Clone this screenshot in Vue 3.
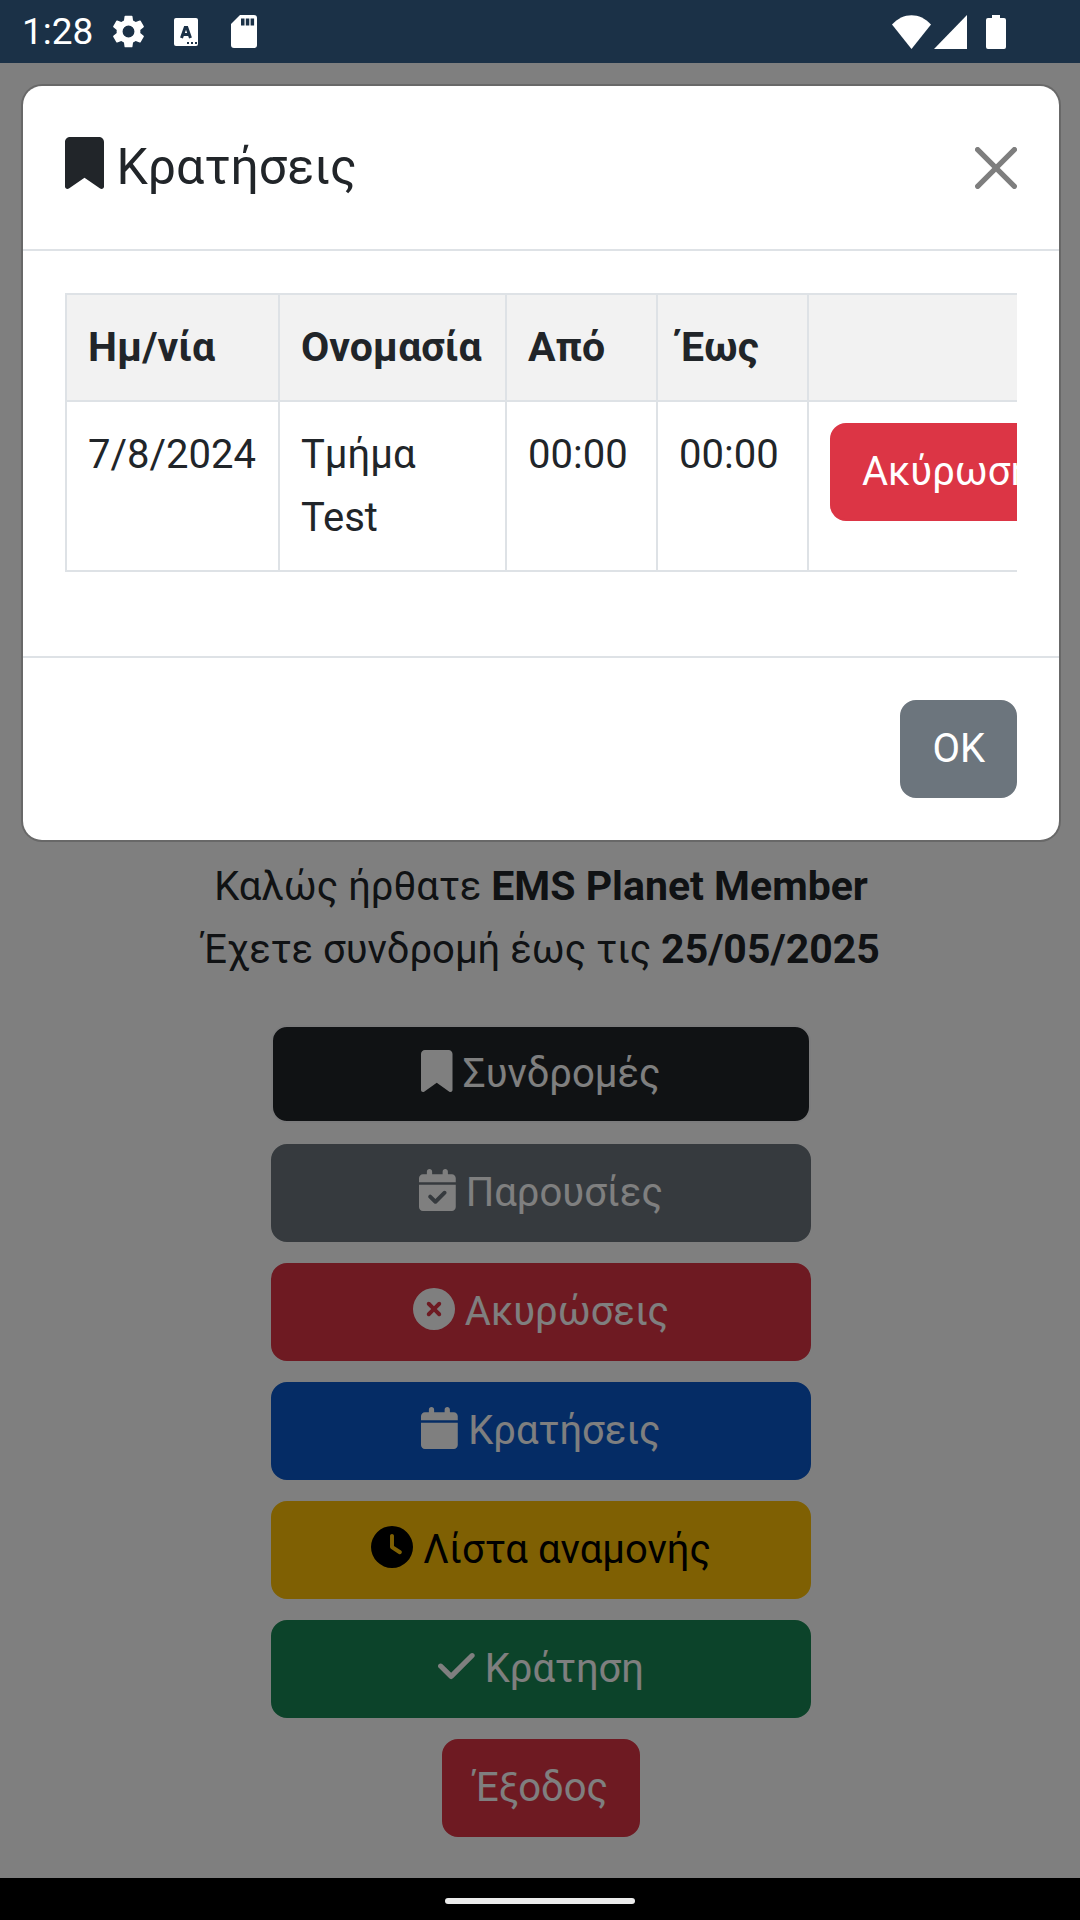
<script setup>
import { ref } from "vue";

const showModal = ref(true);

// Member info shown in the welcome text
const member = {
  name: "EMS Planet Member",
  until: "25/05/2025",
};

const headers = ["Ημ/νία", "Ονομασία", "Από", "Έως", ""];

const bookings = ref([
  { id: 1, date: "7/8/2024", title: "Τμήμα Test", from: "00:00", to: "00:00" },
]);

const icons = {
  bookmark: {
    box: "0 0 384 512",
    path: "M0 48V487.7C0 501.1 10.9 512 24.3 512c5 0 9.9-1.5 14-4.4L192 400 345.7 507.6c4.1 2.9 9 4.4 14 4.4c13.4 0 24.3-10.9 24.3-24.3V48c0-26.5-21.5-48-48-48H48C21.5 0 0 21.5 0 48z",
  },
  calendarCheck: {
    box: "0 0 448 512",
    path: "M128 0c17.7 0 32 14.3 32 32V64H288V32c0-17.7 14.3-32 32-32s32 14.3 32 32V64h48c26.5 0 48 21.5 48 48v48H0V112C0 85.5 21.5 64 48 64H96V32c0-17.7 14.3-32 32-32zM0 192H448V464c0 26.5-21.5 48-48 48H48c-26.5 0-48-21.5-48-48V192zM329 305c9.4-9.4 9.4-24.6 0-33.9s-24.6-9.4-33.9 0l-95 95-47-47c-9.4-9.4-24.6-9.4-33.9 0s-9.4 24.6 0 33.9l64 64c9.4 9.4 24.6 9.4 33.9 0L329 305z",
  },
  circleXmark: {
    box: "0 0 512 512",
    path: "M256 512A256 256 0 1 0 256 0a256 256 0 1 0 0 512zM175 175c9.4-9.4 24.6-9.4 33.9 0l47 47 47-47c9.4-9.4 24.6-9.4 33.9 0s9.4 24.6 0 33.9l-47 47 47 47c9.4 9.4 9.4 24.6 0 33.9s-24.6 9.4-33.9 0l-47-47-47 47c-9.4 9.4-24.6 9.4-33.9 0s-9.4-24.6 0-33.9l47-47-47-47c-9.4-9.4-9.4-24.6 0-33.9z",
  },
  calendar: {
    box: "0 0 448 512",
    path: "M96 32V64H48C21.5 64 0 85.5 0 112v48H448V112c0-26.5-21.5-48-48-48H352V32c0-17.7-14.3-32-32-32s-32 14.3-32 32V64H160V32c0-17.7-14.3-32-32-32S96 14.3 96 32zM448 192H0V464c0 26.5 21.5 48 48 48H400c26.5 0 48-21.5 48-48V192z",
  },
  clock: {
    box: "0 0 512 512",
    path: "M256 0a256 256 0 1 1 0 512A256 256 0 1 1 256 0zM232 120V256c0 8 4 15.5 10.7 20l96 64c11 7.4 25.9 4.4 33.3-6.7s4.4-25.9-6.7-33.3L280 243.2V120c0-13.3-10.7-24-24-24s-24 10.7-24 24z",
  },
  check: {
    box: "0 0 448 512",
    path: "M438.6 105.4c12.5 12.5 12.5 32.8 0 45.3l-256 256c-12.5 12.5-32.8 12.5-45.3 0l-128-128c-12.5-12.5-12.5-32.8 0-45.3s32.8-12.5 45.3 0L160 338.7 393.4 105.4c12.5-12.5 32.8-12.5 45.3 0z",
  },
};

const menu = [
  { label: "Συνδρομές", icon: icons.bookmark, color: "dark" },
  { label: "Παρουσίες", icon: icons.calendarCheck, color: "secondary" },
  { label: "Ακυρώσεις", icon: icons.circleXmark, color: "danger" },
  { label: "Κρατήσεις", icon: icons.calendar, color: "primary" },
  { label: "Λίστα αναμονής", icon: icons.clock, color: "warning" },
  { label: "Κράτηση", icon: icons.check, color: "success" },
];

const closeModal = () => {
  showModal.value = false;
};

const openModal = () => {
  showModal.value = true;
};

// Removes the booking from the list
const cancelBooking = (id) => {
  bookings.value = bookings.value.filter((b) => b.id !== id);
};
</script>

<template>
  <div class="screen">
    <!-- Status bar -->
    <header class="status-bar">
      <div class="status-left">
        <span class="time">1:28</span>
        <svg class="status-icon gear" viewBox="2 2 20 20">
          <path
            d="M19.14 12.94c.04-.3.06-.61.06-.94 0-.32-.02-.64-.07-.94l2.03-1.58a.49.49 0 0 0 .12-.61l-1.92-3.32a.49.49 0 0 0-.59-.22l-2.39.96c-.5-.38-1.03-.7-1.62-.94l-.36-2.54a.48.48 0 0 0-.48-.41h-3.84a.47.47 0 0 0-.47.41l-.36 2.54c-.59.24-1.13.57-1.62.94l-2.39-.96a.48.48 0 0 0-.59.22L2.74 8.87a.47.47 0 0 0 .12.61l2.03 1.58c-.05.3-.09.63-.09.94s.02.64.07.94l-2.03 1.58a.49.49 0 0 0-.12.61l1.92 3.32c.12.22.37.29.59.22l2.39-.96c.5.38 1.03.7 1.62.94l.36 2.54c.05.24.24.41.48.41h3.84c.24 0 .44-.17.47-.41l.36-2.54c.59-.24 1.13-.56 1.62-.94l2.39.96c.22.08.47 0 .59-.22l1.92-3.32a.47.47 0 0 0-.12-.61l-2.01-1.58zM12 15.6A3.6 3.6 0 1 1 12 8.4a3.6 3.6 0 0 1 0 7.2z"
          />
        </svg>
        <svg class="status-icon keyboard" viewBox="0 0 24 28">
          <rect width="24" height="28" rx="2" />
          <path class="cut-line" d="M7.5 20 L11.2 9.500 H12.800 L16.500 20 M9 16.500 H15" />
          <path class="cut" d="M13 24h2v2h-2zM17 24h2v2h-2zM21 24h2v2h-2z" />
        </svg>
        <svg class="status-icon sd-card" viewBox="0 0 26 33">
          <path d="M9 0H23a3 3 0 0 1 3 3V30a3 3 0 0 1-3 3H3a3 3 0 0 1-3-3V9z" />
          <path class="cut" d="M10 3.500h3.500v7H10zM14.800 3.500h3.500v7h-3.500zM19.600 3.500h3.500v7h-3.500z" />
        </svg>
      </div>
      <div class="status-right">
        <svg class="status-icon wifi" viewBox="0 0 39 34">
          <path d="M0 9.500C11-3 28-3 39 9.500L19.500 34z" />
        </svg>
        <svg class="status-icon signal" viewBox="0 0 33 34">
          <path d="M33 0V34H0z" />
        </svg>
        <svg class="status-icon battery" viewBox="0 0 20 34">
          <path d="M6 0h8v3h4a2 2 0 0 1 2 2v27a2 2 0 0 1-2 2H2a2 2 0 0 1-2-2V5a2 2 0 0 1 2-2h4z" />
        </svg>
      </div>
    </header>

    <main class="content">
      <!-- Welcome page -->
      <div class="page">
        <p class="welcome">
          Καλώς ήρθατε <b>{{ member.name }}</b><br />
          Έχετε συνδρομή έως τις <b>{{ member.until }}</b>
        </p>
        <nav class="menu">
          <button
            v-for="item in menu"
            :key="item.label"
            type="button"
            class="btn btn-block"
            :class="'btn-' + item.color"
            @click="openModal"
          >
            <svg class="icon" :viewBox="item.icon.box"><path :d="item.icon.path" /></svg>
            {{ item.label }}
          </button>
          <button type="button" class="btn btn-danger">Έξοδος</button>
        </nav>
      </div>

      <!-- Bookings modal -->
      <div v-if="showModal" class="backdrop">
        <section class="modal" role="dialog" aria-labelledby="modal-title">
          <div class="modal-header">
            <h5 id="modal-title" class="modal-title">
              <svg class="icon" :viewBox="icons.bookmark.box"><path :d="icons.bookmark.path" /></svg>
              Κρατήσεις
            </h5>
            <button type="button" class="btn-close" aria-label="Κλείσιμο" @click="closeModal">
              <svg viewBox="0 0 16 16">
                <path
                  d="M.293.293a1 1 0 0 1 1.414 0L8 6.586 14.293.293a1 1 0 1 1 1.414 1.414L9.414 8l6.293 6.293a1 1 0 0 1-1.414 1.414L8 9.414l-6.293 6.293a1 1 0 0 1-1.414-1.414L6.586 8 .293 1.707a1 1 0 0 1 0-1.414z"
                />
              </svg>
            </button>
          </div>
          <div class="modal-body">
            <!-- The table is wider than the modal, the rest is reached by scrolling -->
            <div class="table-responsive">
              <table class="table">
                <colgroup>
                  <col class="col-date" />
                  <col class="col-title" />
                  <col class="col-time" />
                  <col class="col-time" />
                  <col class="col-action" />
                </colgroup>
                <thead>
                  <tr>
                    <th v-for="header in headers" :key="header">{{ header }}</th>
                  </tr>
                </thead>
                <tbody>
                  <tr v-for="booking in bookings" :key="booking.id">
                    <td>{{ booking.date }}</td>
                    <td>{{ booking.title }}</td>
                    <td>{{ booking.from }}</td>
                    <td>{{ booking.to }}</td>
                    <td>
                      <button
                        type="button"
                        class="btn btn-danger"
                        @click="cancelBooking(booking.id)"
                      >
                        Ακύρωση
                      </button>
                    </td>
                  </tr>
                </tbody>
              </table>
            </div>
          </div>
          <div class="modal-footer">
            <button type="button" class="btn btn-secondary" @click="closeModal">OK</button>
          </div>
        </section>
      </div>
    </main>

    <!-- Gesture bar -->
    <footer class="nav-bar"><span class="nav-pill"></span></footer>
  </div>
</template>

<style>
body {
  margin: 0;
}
</style>

<style scoped>
* {
  box-sizing: border-box;
}
.screen {
  display: flex;
  flex-direction: column;
  min-height: 100vh;
  background: #fff;
  color: #212529;
  font-family: Roboto, "Liberation Sans", sans-serif;
  font-size: 40px;
  line-height: 63px;
}
/* status bar */
.status-bar {
  display: flex;
  justify-content: space-between;
  align-items: center;
  height: 63px;
  padding: 0 74px 0 22px;
  background: #1b3147;
  color: #fff;
}
.status-left,
.status-right {
  display: flex;
  align-items: center;
}
.time {
  margin-right: 19px;
  font-size: 37px;
}
.status-icon {
  fill: currentColor;
}
.cut {
  fill: #1b3147;
}
.cut-line {
  fill: none;
  stroke: #1b3147;
  stroke-width: 3;
}
.gear {
  width: 33px;
  height: 33px;
  margin-right: 29px;
}
.keyboard {
  width: 24px;
  height: 28px;
  margin-right: 33px;
}
.sd-card {
  width: 26px;
  height: 33px;
}
.wifi {
  width: 39px;
  height: 34px;
  margin-right: 3px;
}
.signal {
  width: 33px;
  height: 34px;
  margin-right: 19px;
}
.battery {
  width: 20px;
  height: 34px;
}
/* page */
.content {
  position: relative;
  flex: 1;
  display: flex;
}
.page {
  flex: 1;
  display: flex;
  flex-direction: column;
  justify-content: flex-end;
  padding: 0 19px 41px 21px;
}
.welcome {
  margin: 0 0 44px;
  text-align: center;
}
.welcome b {
  font-size: 41px;
}
.menu {
  display: flex;
  flex-direction: column;
  align-items: center;
  gap: 21px;
}
.btn {
  padding: 16px 30px;
  border: 2px solid transparent;
  border-radius: 16px;
  color: #fff;
  font: inherit;
  line-height: 62px;
  cursor: pointer;
}
.btn-block {
  width: 52%;
}
.btn-dark {
  background: #212529;
  border-color: #f8f9fa;
}
.btn-secondary {
  background: #6c757d;
  border-color: #6c757d;
}
.btn-danger {
  background: #dc3545;
  border-color: #dc3545;
}
.btn-primary {
  background: #0a58ca;
  border-color: #0a58ca;
}
.btn-warning {
  background: #ffc107;
  border-color: #ffc107;
  color: #000;
}
.btn-success {
  background: #198754;
  border-color: #198754;
}
.icon {
  height: 42px;
  vertical-align: -5px;
  fill: currentColor;
}
/* modal */
.backdrop {
  position: absolute;
  inset: 0;
  padding: 21px 19px 21px 21px;
  background: rgba(0, 0, 0, 0.5);
}
.modal {
  border: 2px solid rgba(0, 0, 0, 0.175);
  border-radius: 21px;
  background: #fff;
  background-clip: padding-box;
}
.modal-header {
  display: flex;
  justify-content: space-between;
  align-items: center;
  padding: 42px;
  border-bottom: 2px solid #dee2e6;
}
.modal-title {
  margin: 0;
  font-size: 50px;
  font-weight: 400;
  line-height: 79px;
}
.modal-title .icon {
  height: 52px;
}
.btn-close {
  display: flex;
  padding: 0;
  border: none;
  background: transparent;
  opacity: 0.5;
  cursor: pointer;
}
.btn-close svg {
  width: 42px;
  height: 42px;
}
.modal-body {
  padding: 42px;
}
.table-responsive {
  overflow: auto;
  margin-bottom: 42px;
  scrollbar-width: none;
}
.table {
  width: 1014px;
  table-layout: fixed;
  border-collapse: collapse;
}
.col-date {
  width: 213px;
}
.col-title {
  width: 227px;
}
.col-time {
  width: 151px;
}
.table th,
.table td {
  padding: 21px;
  border: 2px solid #dee2e6;
  text-align: left;
  vertical-align: top;
}
.table th {
  background: #f2f2f2;
  font-size: 41px;
  white-space: nowrap;
}
.modal-footer {
  display: flex;
  justify-content: flex-end;
  padding: 42px;
  border-top: 2px solid #dee2e6;
}
/* gesture bar */
.nav-bar {
  display: flex;
  justify-content: center;
  align-items: center;
  height: 42px;
  padding-top: 4px;
  background: #000;
}
.nav-pill {
  width: 190px;
  height: 6px;
  border-radius: 3px;
  background: #ebebeb;
}
</style>
